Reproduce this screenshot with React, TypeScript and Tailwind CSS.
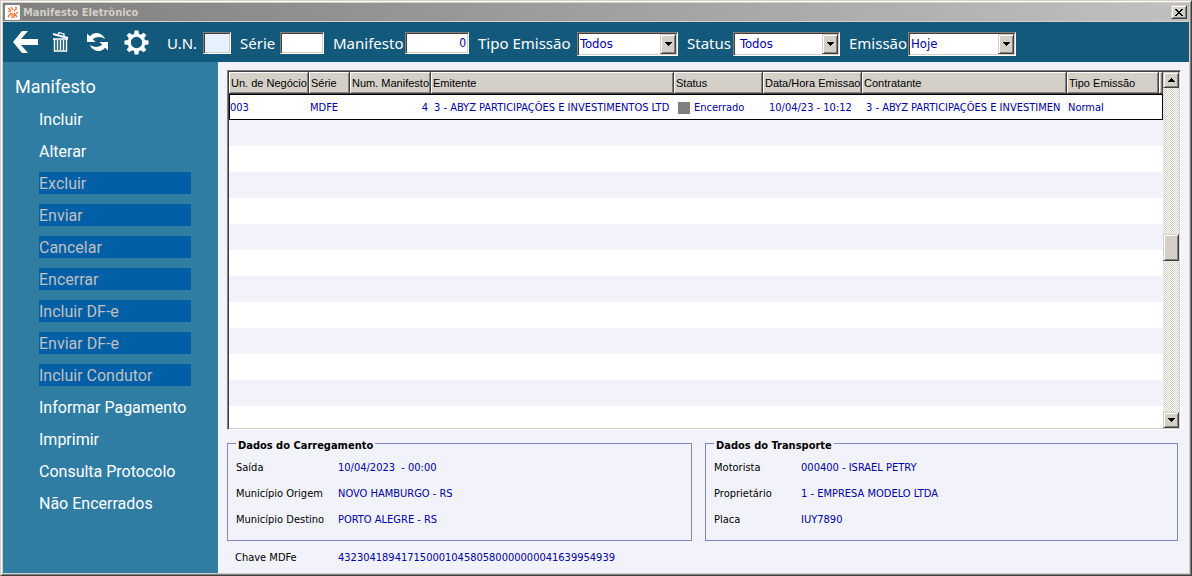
import { useState } from 'react';

const menuItems = [
  { label: 'Incluir' },
  { label: 'Alterar' },
  { label: 'Excluir', disabled: true },
  { label: 'Enviar', disabled: true },
  { label: 'Cancelar', disabled: true },
  { label: 'Encerrar', disabled: true },
  { label: 'Incluir DF-e', disabled: true },
  { label: 'Enviar DF-e', disabled: true },
  { label: 'Incluir Condutor', disabled: true },
  { label: 'Informar Pagamento' },
  { label: 'Imprimir' },
  { label: 'Consulta Protocolo' },
  { label: 'Não Encerrados' },
];

const columns = [
  { label: 'Un. de Negócio', width: 'w-[80px]' },
  { label: 'Série', width: 'w-[41px]' },
  { label: 'Num. Manifesto', width: 'w-[81px]' },
  { label: 'Emitente', width: 'w-[243px]' },
  { label: 'Status', width: 'w-[89px]' },
  { label: 'Data/Hora Emissao', width: 'w-[99px]' },
  { label: 'Contratante', width: 'w-[205px]' },
  { label: 'Tipo Emissão', width: 'w-[92px]' },
  { label: '', width: '' },
];

const carregamento = [
  ['Saída', '10/04/2023  - 00:00'],
  ['Município Origem', 'NOVO HAMBURGO - RS'],
  ['Município Destino', 'PORTO ALEGRE - RS'],
];

const transporte = [
  ['Motorista', '000400 - ISRAEL PETRY'],
  ['Proprietário', '1 - EMPRESA MODELO LTDA'],
  ['Placa', 'IUY7890'],
];

const raised =
  'border border-t-[#d4d0c8] border-l-[#d4d0c8] border-r-[#404040] border-b-[#404040] bg-[#d4d0c8] shadow-[inset_1px_1px_0_#fff,inset_-1px_-1px_0_#808080]';
const sunken =
  'border border-t-[#808080] border-l-[#808080] border-r-white border-b-white shadow-[inset_1px_1px_0_#404040,inset_-1px_-1px_0_#d4d0c8]';

const Arrow = ({ up = false }: { up?: boolean }) => (
  <svg width="7" height="4" viewBox="0 0 7 4" shapeRendering="crispEdges">
    <path d={up ? 'M3 0h1v1h1v1h1v1h1v1H0V3h1V2h1V1h1z' : 'M0 0h7v1H6v1H5v1H4v1H3V3H2V2H1V1H0z'} fill="#000" />
  </svg>
);

type ComboProps = { id: string; value: string; options: string[]; className: string; pad?: string };

const Combo = ({ id, value, options, className, pad = 'pl-[2px]' }: ComboProps) => (
  <div className={`relative h-6 bg-white ${sunken} ${className}`}>
    <select
      id={id}
      defaultValue={value}
      className={`block h-full w-full appearance-none bg-transparent font-['DejaVu_Sans_Condensed','Noto_Sans',sans-serif] text-[13px] text-[#0000a0] outline-none ${pad}`}
    >
      {options.map((o) => (
        <option key={o}>{o}</option>
      ))}
    </select>
    <span className={`pointer-events-none absolute top-px right-px bottom-px flex w-4 items-center justify-center ${raised}`}>
      <Arrow />
    </span>
  </div>
);

const Panel = ({ title, rows, labelWidth, className }: { title: string; rows: string[][]; labelWidth: string; className: string }) => (
  <fieldset className={`border border-[#8484c8] pb-[7px] pl-2 ${className}`}>
    <legend className="px-[2px] pt-[6px] text-[11px] leading-3 font-bold">{title}</legend>
    <dl className="pt-[3px]">
      {rows.map(([label, value]) => (
        <div key={label} className="flex h-[26px] items-center">
          <dt className={labelWidth}>{label}</dt>
          <dd className="whitespace-pre text-[#0000a0]">{value}</dd>
        </div>
      ))}
    </dl>
  </fieldset>
);

const App = () => {
  const [un, setUn] = useState('');
  const [serie, setSerie] = useState('');
  const [manifesto, setManifesto] = useState('0');

  return (
    <div className="flex h-screen flex-col border border-t-[#d4d0c8] border-l-[#d4d0c8] border-r-[#404040] border-b-[#404040] bg-[#d4d0c8] p-[2px] font-['DejaVu_Sans_Condensed','Noto_Sans',sans-serif] text-[11px] text-black shadow-[inset_1px_1px_0_#fff,inset_-1px_-1px_0_#808080]">
      {/* Title bar */}
      <header className="flex h-[18px] shrink-0 items-center bg-linear-to-r from-[#808080] to-[#c0c0c0] px-[2px]">
        <svg width="15" height="15" viewBox="0 0 15 15">
          <rect width="15" height="15" rx="1" fill="#fff" />
          <path
            d="M3 3l3 3M6 2l2 3M12 3L9 6M3 7l3-1M3 12l3-4M7 8v5M9 8l3 4M9 9v4M12 7v2M10 2l2 1"
            stroke="#f07030"
            strokeWidth="1.3"
            fill="none"
          />
        </svg>
        <h1 className="ml-[3px] grow pt-[2px] text-[11px] font-bold text-[#d4d0c8]">Manifesto Eletrônico</h1>
        <button type="button" aria-label="Fechar" className={`flex h-[14px] w-4 items-center justify-center ${raised}`}>
          <svg width="8" height="7" viewBox="0 0 8 7" shapeRendering="crispEdges">
            <path d="M0 0h2v1h1v1h2V1h1V0h2v1H7v1H6v1H5v1h1v1h1v1h1v1H6V6H5V5H3v1H2v1H0V6h1V5h1V4h1V3H2V2H1V1H0z" />
          </svg>
        </button>
      </header>

      {/* Toolbar */}
      <div className="mt-px flex h-10 shrink-0 items-center bg-[#13597b] pl-[10px] font-['Noto_Sans',sans-serif] text-[15px] leading-[22px] text-white">
        <button type="button" aria-label="Voltar" className="mr-[14px]">
          <svg width="25" height="22" viewBox="0 0 25 22">
            <path d="M9 0h6L8 8h17v6H8l7 8H9L0 11z" fill="#fff" />
          </svg>
        </button>
        <button type="button" aria-label="Excluir" className="mr-[17px]">
          <svg width="18" height="22" viewBox="0 0 18 22" fill="none" stroke="#fff">
            <path d="M1 3l15 4" strokeWidth="2" />
            <path d="M6 3.500l1-2 5 1.500v2" strokeWidth="1.300" />
            <path d="M1 8h15M2.500 8v12h12V8" strokeWidth="1.400" />
            <path d="M5.500 9v10M8.500 9v10M11.500 9v10" strokeWidth="1.400" />
          </svg>
        </button>
        <button type="button" aria-label="Atualizar" className="mr-4">
          <svg width="21" height="20" viewBox="0 0 22 20" fill="#fff">
            <path d="M0 1v9h9L6 7c4-3 9-3 13 0C16 0 8-2 3 4z" />
            <path d="M22 19v-9h-9l3 3c-4 3-9 3-13 0 3 7 11 9 16 3z" />
          </svg>
        </button>
        <button type="button" aria-label="Configurações" className="mr-[18px]">
          <svg width="25" height="25" viewBox="-13 -13 26 26">
            <circle r="7.600" fill="none" stroke="#fff" strokeWidth="3.400" />
            {[0, 45, 90, 135, 180, 225, 270, 315].map((angle) => (
              <path key={angle} d="M-2.600 -8l.6 -4.500h4l.6 4.500z" fill="#fff" transform={`rotate(${angle})`} />
            ))}
          </svg>
        </button>
        <div className="flex gap-[9px] self-start pt-[10px]">
          <div className="flex">
            <label htmlFor="un" className="w-9">U.N.</label>
            <input id="un" value={un} onChange={(e) => setUn(e.target.value)} className={`h-[22px] w-7 bg-[#e6f0ff] px-1 text-[12px] text-[#0000a0] ${sunken}`} />
          </div>
          <div className="flex">
            <label htmlFor="serie" className="w-10">Série</label>
            <input id="serie" value={serie} onChange={(e) => setSerie(e.target.value)} className={`h-[22px] w-11 bg-white px-1 text-[12px] text-[#0000a0] ${sunken}`} />
          </div>
          <div className="flex">
            <label htmlFor="manifesto" className="w-[72px]">Manifesto</label>
            <input
              id="manifesto"
              value={manifesto}
              onChange={(e) => setManifesto(e.target.value)}
              className={`h-[22px] w-16 bg-white px-[2px] text-right font-['DejaVu_Sans_Condensed','Noto_Sans',sans-serif] text-[12px] text-[#0000a0] ${sunken}`}
            />
          </div>
          <div className="flex">
            <label htmlFor="tipo" className="w-[99px]">Tipo Emissão</label>
            <Combo id="tipo" value="Todos" options={['Todos', 'Normal']} className="w-[101px]" />
          </div>
          <div className="flex">
            <label htmlFor="status" className="w-[46px]">Status</label>
            <Combo id="status" value="Todos" options={['Todos', 'Encerrado']} className="w-[107px]" pad="pl-[6px]" />
          </div>
          <div className="flex">
            <label htmlFor="emissao" className="w-[59px]">Emissão</label>
            <Combo id="emissao" value="Hoje" options={['Hoje', 'Todos']} className="w-[108px]" />
          </div>
        </div>
      </div>

      <div className="flex min-h-0 grow">
        {/* Sidebar */}
        <nav className="w-[215px] shrink-0 bg-[#2f7da2] font-[Roboto,'Noto_Sans',sans-serif] text-[16px] text-white">
          <h2 className="mt-[13px] ml-3 text-[18px] leading-6">Manifesto</h2>
          <ul className="mt-[9px] ml-9 flex w-[152px] flex-col gap-[10px]">
            {menuItems.map((item) => (
              <li key={item.label}>
                <button
                  type="button"
                  disabled={item.disabled}
                  className="block h-[22px] w-full text-left leading-6 whitespace-nowrap disabled:bg-[#005fa5] disabled:text-[#c0c0c0]"
                >
                  {item.label}
                </button>
              </li>
            ))}
          </ul>
        </nav>

        <main className="flex min-w-0 grow flex-col bg-[#f2f3fa] pt-2 pr-2 pl-[9px]">
          {/* Grid */}
          <div className={`flex min-h-0 grow overflow-hidden bg-white p-px ${sunken}`}>
            <div className="min-w-0 grow overflow-hidden">
              <table className="w-full table-fixed border-separate border-spacing-0">
                <thead>
                  <tr>
                    {columns.map((c) => (
                      <th
                        key={c.label}
                        className={`h-[22px] overflow-hidden border-r border-b border-[#404040] bg-[#d4d0c8] pl-[2px] text-left font-['Liberation_Sans',Arial,sans-serif] text-[11px] leading-4 font-normal whitespace-nowrap shadow-[inset_1px_1px_0_#fff,inset_-1px_-1px_0_#808080] ${c.width}`}
                      >
                        {c.label}
                      </th>
                    ))}
                  </tr>
                </thead>
                <tbody>
                  <tr className="h-[26px] bg-white whitespace-nowrap text-[#0000a0] *:overflow-hidden *:border-y *:border-black *:pt-[2px]">
                    <td className="border-l">003</td>
                    <td className="pl-px">MDFE</td>
                    <td className="pr-[3px] text-right">4</td>
                    <td className="pl-[3px]">3 - ABYZ PARTICIPAÇÕES E INVESTIMENTOS LTD</td>
                    <td className="pl-1">
                      <div className="flex items-center gap-1">
                        <span className="size-3 bg-[#808080]" />
                        Encerrado
                      </div>
                    </td>
                    <td className="pl-[6px]">10/04/23 - 10:12</td>
                    <td className="pl-1">3 - ABYZ PARTICIPAÇÕES E INVESTIMEN</td>
                    <td className="pl-px">Normal</td>
                    <td className="border-r" />
                  </tr>
                  {[...Array(12)].map((_, i) => (
                    <tr key={i} className="h-[26px] odd:bg-white even:bg-[#f2f3fa]">
                      <td colSpan={9} />
                    </tr>
                  ))}
                </tbody>
              </table>
            </div>
            <div className="flex w-4 shrink-0 flex-col bg-[repeating-conic-gradient(#d4d0c8_0_25%,#fff_0_50%)] bg-size-[2px_2px]">
              <button type="button" aria-label="Subir" className={`flex h-4 items-center justify-center ${raised}`}>
                <Arrow up />
              </button>
              <div className="grow-[145]" />
              <div className={`h-[27px] ${raised}`} />
              <div className="grow-[150]" />
              <button type="button" aria-label="Descer" className={`flex h-4 items-center justify-center ${raised}`}>
                <Arrow />
              </button>
            </div>
          </div>

          {/* Details */}
          <div className="mt-1 mr-[3px] flex gap-[13px]">
            <Panel title="Dados do Carregamento" rows={carregamento} labelWidth="w-[102px]" className="grow-[465] basis-0" />
            <Panel title="Dados do Transporte" rows={transporte} labelWidth="w-[87px]" className="grow-[473] basis-0" />
          </div>
          <div className="flex h-8 items-center pt-[2px] pl-2">
            <span className="w-[103px]">Chave MDFe</span>
            <span className="text-[#0000a0]">43230418941715000104580580000000041639954939</span>
          </div>
        </main>
      </div>
    </div>
  );
};

export default App;
